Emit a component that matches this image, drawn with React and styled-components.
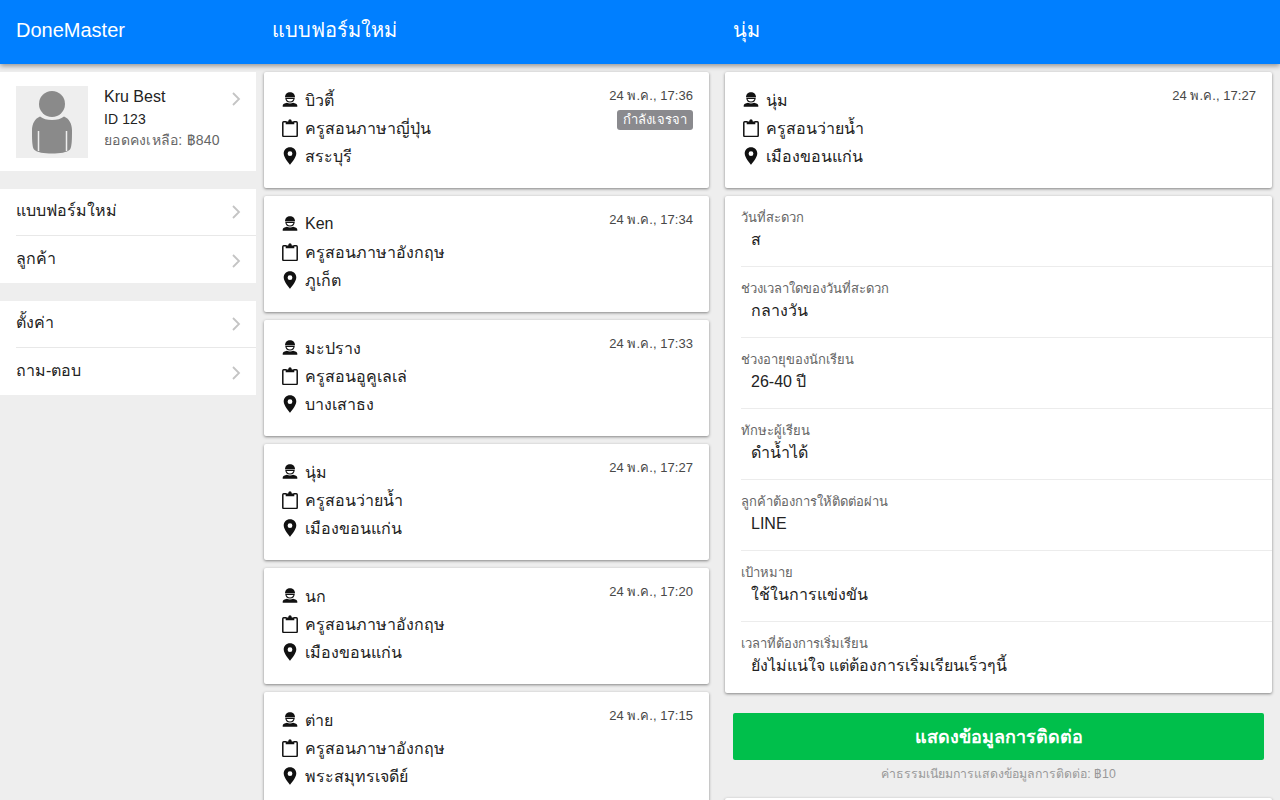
import React from "react";
import styled, { createGlobalStyle } from "styled-components";

const Global = createGlobalStyle`
  html, body { margin: 0; padding: 0; height: 800px; overflow: hidden; background: #eeeeee; }
  body { font-family: "Liberation Sans", Arial, "Noto Sans", sans-serif; color: #222; }
  * { box-sizing: border-box; }
`;

const Page = styled.div`
  width: 1280px;
  height: 800px;
  overflow: hidden;
  display: flex;
  flex-direction: column;
`;
const Header = styled.header`
  height: 64px;
  flex: none;
  background: #007fff;
  color: #fff;
  display: grid;
  grid-template-columns: 272px 461px 1fr;
  align-items: center;
  padding-bottom: 4px;
  box-shadow: 0 2px 5px rgba(0,0,0,.38);
  position: relative;
  z-index: 2;
  font-size: 20px;
`;
const Brand = styled.div`padding-left: 16px;`;
const HeaderTitle = styled.div`font-weight: 400;`;
const Columns = styled.div`
  flex: 1;
  min-height: 0;
  display: grid;
  grid-template-columns: 256px 445px 555px;
  column-gap: 8px;
  padding-top: 8px;
`;
const Side = styled.aside`
  display: flex;
  flex-direction: column;
  gap: 18px;
`;
const Panel = styled.div`
  background: #fff;
  padding-left: 16px;
`;
const Profile = styled.div`
  background: #fff;
  height: 99px;
  padding: 14px 16px;
  display: flex;
  gap: 16px;
  position: relative;
`;
const Avatar = styled.div`
  width: 72px;
  height: 72px;
  background: #eeeeee;
  flex: none;
`;
const ProfileText = styled.div`
  display: flex;
  flex-direction: column;
`;
const ProfileName = styled.div`font-size: 16px; line-height: 22px;`;
const ProfileId = styled.div`font-size: 14px; line-height: 23px; letter-spacing: .1px;`;
const Balance = styled.div`font-size: 14px; line-height: 18px; color: #666; letter-spacing: .25px;`;
const Chevron = styled.svg`
  width: 10px;
  height: 14px;
  flex: none;
  fill: none;
  stroke: #c4c4c4;
  stroke-width: 1.800;
`;
const ProfileChevron = styled(Chevron)`
  position: absolute;
  right: 15px;
  top: 20px;
`;
const MenuRow = styled.div`
  height: ${p => (p.$first ? "46px" : "48px")};
  padding-right: 15px;
  display: flex;
  align-items: center;
  justify-content: space-between;
  font-size: 16px;
  border-top: ${p => (p.$first ? "none" : "1px solid #e8e8e8")};
  & > span { margin-top: ${p => (p.$first ? "-4px" : "-2px")}; }
  & > svg { margin-top: ${p => (p.$first ? "0" : "3px")}; }
`;
const Feed = styled.main`
  display: flex;
  flex-direction: column;
  gap: 8px;
`;
const Card = styled.article`
  flex: none;
  background: #fff;
  height: 116px;
  border-radius: 2px;
  box-shadow: 0 1px 3px rgba(0,0,0,.45);
  padding: 14px 16px 0 18px;
  position: relative;
`;
const Line = styled.div`
  height: 28px;
  display: flex;
  align-items: center;
  gap: 7px;
  font-size: 16px;
`;
const IconSlot = styled.div`
  width: 16px;
  height: 18px;
  flex: none;
  display: flex;
  align-items: center;
  justify-content: center;
  margin-top: -1px;
`;
const Stamp = styled.div`
  position: absolute;
  top: 15px;
  right: 16px;
  font-size: 13px;
  line-height: 18px;
  color: #484848;
  letter-spacing: .05px;
`;
const Badge = styled.div`
  position: absolute;
  top: 38px;
  right: 16px;
  background: #8a8a8e;
  color: #fff;
  font-size: 13px;
  line-height: 20px;
  height: 20px;
  padding: 0 6px;
  border-radius: 3px;
  letter-spacing: .1px;
`;
const Detail = styled.aside`
  display: flex;
  flex-direction: column;
  margin-left: 8px;
`;
const DetailCard = styled(Card)`
  margin-bottom: 8px;
`;
const Facts = styled.section`
  background: #fff;
  border-radius: 2px;
  box-shadow: 0 1px 3px rgba(0,0,0,.45);
  height: 497px;
  padding-left: 16px;
  flex: none;
`;
const Fact = styled.div`
  height: ${p => (p.$first ? "70px" : "71px")};
  padding-top: ${p => (p.$first ? "12.500px" : "13px")};
  border-top: ${p => (p.$first ? "none" : "1px solid #ececec")};
`;
const FactLabel = styled.div`
  font-size: 13px;
  line-height: 18px;
  color: #666;
`;
const FactValue = styled.div`
  font-size: 16px;
  line-height: 26px;
  padding-left: 10px;
`;
const Action = styled.button`
  flex: none;
  margin: 20px 8px 0;
  height: 47px;
  border: 0;
  border-radius: 2px;
  background: #00bf4b;
  color: #fff;
  font: 700 18px "Liberation Sans", "Noto Sans", sans-serif;
`;
const Note = styled.div`
  flex: none;
  text-align: center;
  font-size: 12.300px;
  line-height: 16px;
  color: #999;
  margin-top: 6px;
`;
const NextCard = styled(Facts)`
  margin-top: 16px;
  height: 60px;
`;

const PersonIcon = () => (
  <svg width="16" height="15" viewBox="0 0 16 15">
    <path d="M3 5.300C3 2.200 5.200.3 8 .3s5 1.900 5 5z" fill="#111" />
    <path d="M3.900 6.300h8.200C11.900 8.700 10.200 10 8 10S4.100 8.700 3.900 6.300z" fill="none" stroke="#111" strokeWidth="1.200" />
    <path d="M.7 14.700v-1.200c0-1.300 2-2.200 4.200-2.700 2 .9 4.200.9 6.200 0 2.200.5 4.200 1.400 4.200 2.700v1.200z" fill="#111" />
  </svg>
);
const ClipIcon = () => (
  <svg width="16" height="18" viewBox="0 0 16 18">
    <path d="M4.500 2.800H1.700C1.200 2.800.8 3.200.8 3.700v12.800c0 .5.4.9.9.9h12.600c.5 0 .9-.4.900-.9V3.700c0-.5-.4-.9-.9-.9h-2.800" fill="none" stroke="#111" strokeWidth="1.500" />
    <path d="M3.700 5.300V2.500h2.500C6.400 1.200 7.100.3 8 .3s1.600.9 1.800 2.200h2.500v2.800z" fill="#111" />
  </svg>
);
const PinIcon = () => (
  <svg width="14" height="18" viewBox="0 0 14 18">
    <path fillRule="evenodd" d="M7 .3C3.400.3.700 3 .7 6.500.7 10.700 7 17.700 7 17.700s6.300-7 6.300-11.200C13.300 3 10.600.3 7 .3zm0 4a2.400 2.400 0 1 1 0 4.800 2.400 2.400 0 0 1 0-4.800z" fill="#111" />
  </svg>
);
const Arrow = () => (
  <Chevron viewBox="0 0 10 14"><path d="M2 1l6 6-6 6" /></Chevron>
);

const Info = ({ name, job, place }) => (
  <>
    <Line><IconSlot><PersonIcon /></IconSlot><span>{name}</span></Line>
    <Line><IconSlot><ClipIcon /></IconSlot><span>{job}</span></Line>
    <Line><IconSlot><PinIcon /></IconSlot><span>{place}</span></Line>
  </>
);

const leads = [
  { name: "บิวตี้", job: "ครูสอนภาษาญี่ปุ่น", place: "สระบุรี", time: "24 พ.ค., 17:36", badge: "กำลังเจรจา" },
  { name: "Ken", job: "ครูสอนภาษาอังกฤษ", place: "ภูเก็ต", time: "24 พ.ค., 17:34" },
  { name: "มะปราง", job: "ครูสอนอูคูเลเล่", place: "บางเสาธง", time: "24 พ.ค., 17:33" },
  { name: "นุ่ม", job: "ครูสอนว่ายน้ำ", place: "เมืองขอนแก่น", time: "24 พ.ค., 17:27" },
  { name: "นก", job: "ครูสอนภาษาอังกฤษ", place: "เมืองขอนแก่น", time: "24 พ.ค., 17:20" },
  { name: "ต่าย", job: "ครูสอนภาษาอังกฤษ", place: "พระสมุทรเจดีย์", time: "24 พ.ค., 17:15" },
];
const facts = [
  ["วันที่สะดวก", "ส"],
  ["ช่วงเวลาใดของวันที่สะดวก", "กลางวัน"],
  ["ช่วงอายุของนักเรียน", "26-40 ปี"],
  ["ทักษะผู้เรียน", "ดำน้ำได้"],
  ["ลูกค้าต้องการให้ติดต่อผ่าน", "LINE"],
  ["เป้าหมาย", "ใช้ในการแข่งขัน"],
  ["เวลาที่ต้องการเริ่มเรียน", "ยังไม่แน่ใจ แต่ต้องการเริ่มเรียนเร็วๆนี้"],
];

export default function App() {
  return (
    <Page>
      <Global />
      <Header>
        <Brand>DoneMaster</Brand>
        <HeaderTitle>แบบฟอร์มใหม่</HeaderTitle>
        <HeaderTitle>นุ่ม</HeaderTitle>
      </Header>
      <Columns>
        <Side>
          <Profile>
            <Avatar>
              <svg width="72" height="72" viewBox="0 0 72 72">
                <circle cx="36" cy="18" r="13" fill="#8a8a8a" />
                <path d="M24 30.500c3 2.500 7 3.500 12 3.500s9-1 12-3.500c5 2 8 7 8 14 0 8 0 16-2 19-3 3-10 4-18 4s-15-1-18-4c-2-3-2-11-2-19 0-7 3-12 8-14z" fill="#8a8a8a" />
                <path d="M22.500 45v20M50.500 45v20" stroke="#eeeeee" strokeWidth="1.500" />
              </svg>
            </Avatar>
            <ProfileText>
              <ProfileName>Kru Best</ProfileName>
              <ProfileId>ID 123</ProfileId>
              <Balance>ยอดคงเหลือ: ฿840</Balance>
            </ProfileText>
            <ProfileChevron viewBox="0 0 10 14"><path d="M2 1l6 6-6 6" /></ProfileChevron>
          </Profile>
          <Panel>
            <MenuRow $first><span>แบบฟอร์มใหม่</span><Arrow /></MenuRow>
            <MenuRow><span>ลูกค้า</span><Arrow /></MenuRow>
          </Panel>
          <Panel>
            <MenuRow $first><span>ตั้งค่า</span><Arrow /></MenuRow>
            <MenuRow><span>ถาม-ตอบ</span><Arrow /></MenuRow>
          </Panel>
        </Side>
        <Feed>
          {leads.map(l => (
            <Card key={l.time}>
              <Info {...l} />
              <Stamp>{l.time}</Stamp>
              {l.badge && <Badge>{l.badge}</Badge>}
            </Card>
          ))}
        </Feed>
        <Detail>
          <DetailCard>
            <Info name="นุ่ม" job="ครูสอนว่ายน้ำ" place="เมืองขอนแก่น" />
            <Stamp>24 พ.ค., 17:27</Stamp>
          </DetailCard>
          <Facts>
            {facts.map(([k, v], i) => (
              <Fact key={k} $first={i === 0}>
                <FactLabel>{k}</FactLabel>
                <FactValue>{v}</FactValue>
              </Fact>
            ))}
          </Facts>
          <Action>แสดงข้อมูลการติดต่อ</Action>
          <Note>ค่าธรรมเนียมการแสดงข้อมูลการติดต่อ: ฿10</Note>
          <NextCard />
        </Detail>
      </Columns>
    </Page>
  );
}
